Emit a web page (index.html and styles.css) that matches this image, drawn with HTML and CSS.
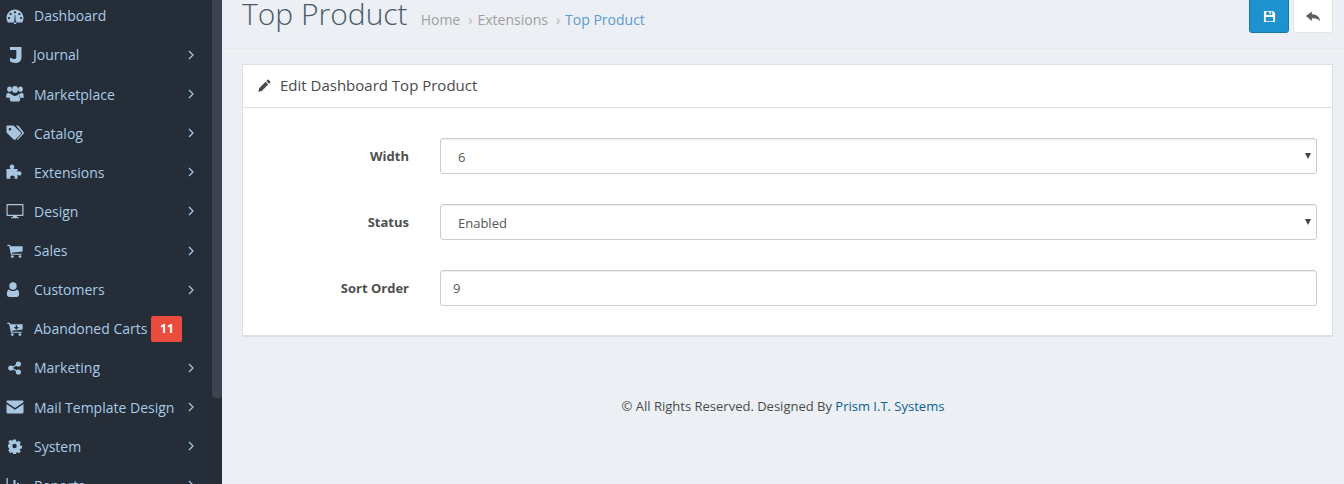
FILE: index.html
```html
<!DOCTYPE html>
<html lang="en">
<head>
<meta charset="utf-8">
<title>Top Product</title>
<link rel="stylesheet" href="styles.css">
</head>
<body>
<aside class="sidebar">
  <nav class="nav">
    <a class="item"><svg class="ico" viewBox="0 0 18 16"><path fill-rule="evenodd" d="M9 1.500C4.200 1.500.5 5.300.5 10c0 1.600.4 3 1.200 4.300.1.200.3.200.5.200h13.600c.2 0 .4 0 .5-.2.8-1.300 1.200-2.700 1.200-4.300 0-4.700-3.700-8.500-8.500-8.500zM9 3.200a1.100 1.100 0 1 1 0 2.200 1.100 1.100 0 0 1 0-2.200zM4.600 5a1.100 1.100 0 1 1 0 2.200 1.100 1.100 0 0 1 0-2.200zM13.400 5a1.100 1.100 0 1 1 0 2.200 1.100 1.100 0 0 1 0-2.200zM3 9a1.100 1.100 0 1 1 0 2.200A1.100 1.100 0 0 1 3 9zM15 9a1.100 1.100 0 1 1 0 2.200A1.100 1.100 0 0 1 15 9zM8.300 13.300L8.700 7h.6l.4 6.300a1.500 1.500 0 1 1-1.400 0z"/></svg><span class="label">Dashboard</span></a>
    <a class="item"><svg class="ico" viewBox="0 0 18 16"><path d="M4 0h11.500v10c0 3.800-2.200 6-5.800 6-2.400 0-4.400-.7-5.700-1.700v-3.800c1.300.9 2.900 1.500 4.300 1.500 1.300 0 2-.6 2-2V3H4z"/></svg><span class="label journal">Journal</span><svg class="chev" viewBox="0 0 6 10"><path d="M1 1l4 4-4 4"/></svg></a>
    <a class="item"><svg class="ico" viewBox="0 1 18 14" preserveAspectRatio="none"><circle cx="3.500" cy="3.800" r="2.300"/><circle cx="14.500" cy="3.800" r="2.300"/><circle cx="9" cy="4" r="3"/><path d="M.2 10.800C.2 8.200 1 7 2.500 7c.6.600 1.300.9 2.100.9.300 0 .5 0 .7-.1-.6 1-.9 2.200-.9 3.500H1c-.5 0-.8-.2-.8-.5zM17.800 10.800c0-2.600-.8-3.800-2.300-3.800-.6.600-1.300.9-2.100.9-.3 0-.5 0-.7-.1.600 1 .9 2.200.9 3.500H17c.5 0 .8-.2.800-.5zM5.500 8.200c1 1 2.200 1.500 3.500 1.500s2.500-.5 3.500-1.500c1.300.1 1.700 2 1.700 4.300 0 1.500-1 2-2 2H5.800c-1 0-2-.5-2-2 0-2.300.4-4.200 1.700-4.300z"/></svg><span class="label">Marketplace</span><svg class="chev" viewBox="0 0 6 10"><path d="M1 1l4 4-4 4"/></svg></a>
    <a class="item"><svg class="ico" viewBox="0 0 18 16"><path fill-rule="evenodd" d="M.5 1.500C.5 1 1 .5 1.500.5H7c.5 0 1 .3 1.400.7l6.300 6.300c.5.500.5 1.300 0 1.800l-5.300 5.300c-.5.500-1.300.5-1.800 0L1.200 8.300C.8 7.900.5 7.400.5 7zM4 3a1.300 1.300 0 1 0 0 2.600A1.300 1.300 0 0 0 4 3z"/><path d="M10 .5h1.500c.5 0 1 .3 1.400.7l4.600 5.800c.5.600.5 1.300 0 1.800l-5.300 5.700c-.4.400-1 .4-1.500.1l5-5.500c.5-.6.500-1.300 0-1.800z"/></svg><span class="label">Catalog</span><svg class="chev" viewBox="0 0 6 10"><path d="M1 1l4 4-4 4"/></svg></a>
    <a class="item"><svg class="ico" viewBox="0 0 18 16"><path d="M.5 5h4.200C4 4 3.800 3.400 3.800 2.700 3.800 1.400 4.900.6 6 .6s2.300.8 2.300 2.100c0 .7-.3 1.400-.9 2.300H11.500v3.200c.6-.6 1.200-.9 1.900-.9 1.200 0 2.100 1 2.100 2.100s-.9 2.100-2.100 2.100c-.7 0-1.300-.3-1.900-.9v4.200H8.200c.4-.6.6-1.100.6-1.600 0-1-.9-1.800-2.300-1.800s-2.300.8-2.300 1.800c0 .5.200 1 .6 1.600H.5z"/></svg><span class="label">Extensions</span><svg class="chev" viewBox="0 0 6 10"><path d="M1 1l4 4-4 4"/></svg></a>
    <a class="item"><svg class="ico" viewBox="0 0 18 16"><path fill-rule="evenodd" d="M1.500 1h15c.6 0 1 .4 1 1v10c0 .6-.4 1-1 1H11v1.200h2v1H5v-1h2V13H1.500c-.6 0-1-.4-1-1V2c0-.6.400-1 1-1zm.2 1.200v9.600h14.600V2.200z"/></svg><span class="label">Design</span><svg class="chev" viewBox="0 0 6 10"><path d="M1 1l4 4-4 4"/></svg></a>
    <a class="item"><svg class="ico" viewBox="-1 0 20 16"><path d="M.5 1h3l.5 1.800h13.500v5.700L5.500 10l.3 1h10.700v1.200H4.500L2.500 2.500H.5z"/><circle cx="6" cy="14.200" r="1.500"/><circle cx="14.500" cy="14.200" r="1.500"/></svg><span class="label">Sales</span><svg class="chev" viewBox="0 0 6 10"><path d="M1 1l4 4-4 4"/></svg></a>
    <a class="item"><svg class="ico" viewBox="-.5 0 18 16"><circle cx="6.500" cy="4" r="3.700"/><path d="M2.600 7.400c1 1 2.400 1.500 3.900 1.500s2.900-.5 3.900-1.500c1.600.2 2.200 2.300 2.200 4.800 0 1.800-1 2.800-2.500 2.800H3C1.500 15 .4 14 .4 12.200c0-2.500.6-4.600 2.200-4.800z"/></svg><span class="label">Customers</span><svg class="chev" viewBox="0 0 6 10"><path d="M1 1l4 4-4 4"/></svg></a>
    <a class="item"><svg class="ico" viewBox="-1 0 20 16"><path fill-rule="evenodd" d="M.5 1h3l.5 1.800h13.500v5.700L5.500 10l.3 1h10.700v1.200H4.500L2.500 2.500H.5zM9.800 3.500v2.200H7.600l2.900 3 2.900-3h-2.200V3.500z"/><circle cx="6" cy="14.200" r="1.500"/><circle cx="14.500" cy="14.200" r="1.500"/></svg><span class="label">Abandoned Carts</span><span class="badge">11</span></a>
    <a class="item"><svg class="ico" viewBox="-1 -1 18 18"><circle cx="3.300" cy="8" r="2.900"/><circle cx="11.800" cy="3.500" r="2.900"/><circle cx="11.800" cy="12.500" r="2.900"/><path d="M3.300 7.300l8-4.300.6 1.200-8 4.300zM3.900 7.300l8 4.300-.6 1.200-8-4.300z"/></svg><span class="label">Marketing</span><svg class="chev" viewBox="0 0 6 10"><path d="M1 1l4 4-4 4"/></svg></a>
    <a class="item"><svg class="ico" viewBox="0 0 18 16"><path d="M.5 2.800c0-.8.600-1.300 1.300-1.300h14.400c.7 0 1.300.5 1.300 1.300v.4L9 9 .5 3.200zM.5 5l8.500 5.800L17.500 5v8.200c0 .8-.6 1.300-1.300 1.300H1.800c-.7 0-1.300-.5-1.300-1.300z"/></svg><span class="label">Mail Template Design</span><svg class="chev" viewBox="0 0 6 10"><path d="M1 1l4 4-4 4"/></svg></a>
    <a class="item"><svg class="ico" viewBox="-1 -1 18 18"><path fill-rule="evenodd" d="M6 .8h3l.4 2 1.300.5 1.700-1.100 2.100 2.100-1.100 1.700.5 1.300 2 .4v3l-2 .4-.5 1.300 1.100 1.700-2.100 2.100-1.700-1.100-1.300.5-.4 2H6l-.4-2-1.300-.5-1.700 1.100L.5 12.900l1.100-1.700-.5-1.300-1-.4V6.500l1-.4.500-1.300L.5 3.100 2.600 1l1.700 1.100 1.300-.5zM7.500 5.500a2.500 2.500 0 1 0 0 5 2.500 2.500 0 0 0 0-5z"/></svg><span class="label">System</span><svg class="chev" viewBox="0 0 6 10"><path d="M1 1l4 4-4 4"/></svg></a>
    <a class="item"><svg class="ico" viewBox="0 0 18 16"><path d="M.5 1h1.300v12.700h15.700V15H.5zM4 8h2v5H4zM7.500 3h2v10h-2zM11 6h2v7h-2zM14.500 9h2v4h-2z"/></svg><span class="label">Reports</span><svg class="chev" viewBox="0 0 6 10"><path d="M1 1l4 4-4 4"/></svg></a>
  </nav>
  <div class="scrollbar"><div class="thumb"></div></div>
</aside>
<div class="main">
  <header class="page-header">
    <h1 class="title">Top Product</h1>
    <ul class="crumbs">
      <li class="crumb">Home</li>
      <li class="crumb sep">Extensions</li>
      <li class="crumb sep current">Top Product</li>
    </ul>
    <div class="actions">
      <button class="btn primary" type="button" aria-label="Save"><svg viewBox="0 0 14 14"><path fill-rule="evenodd" d="M1.500 1h9.300L13 3.200v9.300c0 .3-.2.500-.5.500h-11c-.3 0-.5-.2-.5-.5v-11c0-.3.200-.5.500-.5zM3.500 2v3.500h6.500V2H8.500v2.500H7V2zM3 7.500V12h8V7.500z"/></svg></button>
      <button class="btn ghost" type="button" aria-label="Back"><svg viewBox="0 0 14 14"><path d="M6 2.200v2.300c4 0 6.800 1.700 7.300 6.500-1.100-2.300-3.300-3-7.300-3v2.400L.8 6.200z"/></svg></button>
    </div>
  </header>
  <section class="panel">
    <div class="panel-head">
      <svg class="pencil" viewBox="0 0 14 14"><path d="M10.300.8c.3-.3.700-.3 1 0l1.900 1.900c.3.300.3.700 0 1L11.800 5.100 8.900 2.200zM8.100 3l2.900 2.900-6.900 6.900L.4 13.600l.8-3.700z"/></svg>
      <h2 class="panel-title">Edit Dashboard Top Product</h2>
    </div>
    <form class="form">
      <div class="row">
        <label class="field-label">Width</label>
        <div class="select-wrap"><select class="control select"><option>6</option></select></div>
      </div>
      <div class="row">
        <label class="field-label">Status</label>
        <div class="select-wrap"><select class="control select"><option>Enabled</option></select></div>
      </div>
      <div class="row">
        <label class="field-label">Sort Order</label>
        <input class="control input" type="text" value="9">
      </div>
    </form>
  </section>
  <footer class="footer">© All Rights Reserved. Designed By <a class="footer-link">Prism I.T. Systems</a></footer>
</div>
</body>
</html>
```
FILE: styles.css
```css
* { box-sizing: border-box; }
html, body { height: 100%; }
body {
  margin: 0;
  height: 484px;
  overflow: hidden;
  display: flex;
  background: #eceff4;
  font-family: "Open Sans", sans-serif;
  font-size: 13px;
  color: #4a4a4a;
}
.sidebar {
  width: 222px;
  flex: none;
  height: 484px;
  overflow: hidden;
  display: flex;
  background: #252d38;
}
.nav {
  width: 212px;
  flex: none;
  margin-top: -3.72px;
  display: flex;
  flex-direction: column;
}
.item {
  flex: none;
  height: 39.14px;
  display: flex;
  align-items: center;
  padding: 0 18px 0 6px;
  color: #a9cbe6;
  font-size: 14px;
}
.ico {
  width: 18px;
  height: 16px;
  flex: none;
  fill: #a9c6e0;
  margin-right: 10px;
}
.label { white-space: nowrap; }
.journal { margin-left: -1px; }
.chev {
  width: 6px;
  height: 10px;
  margin-left: auto;
  fill: none;
  stroke: #a9cbe6;
  stroke-width: 1.2;
}
.badge {
  margin-left: 4px;
  width: 31px;
  height: 26px;
  display: flex;
  align-items: center;
  justify-content: center;
  background: #e74c3c;
  border-radius: 2px;
  color: #fff;
  font-size: 12px;
  font-weight: 700;
}
.scrollbar {
  width: 10px;
  flex: none;
  background: #252d38;
}
.thumb {
  height: 398px;
  background: #3b4450;
  border-radius: 0 0 3px 3px;
}
.main {
  flex: 1;
  min-width: 0;
  display: flex;
  flex-direction: column;
}
.page-header {
  height: 49px;
  flex: none;
  display: flex;
  align-items: flex-start;
  padding: 0 11px 0 20px;
  border-bottom: 1px solid #e6e8ec;
}
.title {
  margin: -7px 0 0;
  font-size: 30px;
  font-weight: 300;
  line-height: 42px;
  color: #4a5a6a;
  white-space: nowrap;
}
.crumbs {
  list-style: none;
  margin: 0 0 0 13px;
  padding: 10px 0 0;
  display: flex;
  font-size: 14px;
  line-height: 20px;
  color: #a0a0a0;
}
.crumb.sep::before {
  content: "›";
  margin: 0 5px 0 8px;
  color: #b5b5b5;
}
.current { color: #5b9bd1; }
.actions {
  margin-left: auto;
  display: flex;
  gap: 4px;
  margin-top: -8px;
}
.btn {
  width: 40px;
  height: 41px;
  padding: 0;
  border: 1px solid transparent;
  border-radius: 3px;
  display: flex;
  align-items: center;
  justify-content: center;
}
.btn svg { width: 13px; height: 13px; margin-top: 8px; }
.primary { background: #1e91cf; border-color: #1978ab; }
.primary svg { fill: #fff; }
.ghost { background: #fff; border-color: #e2e4e8; }
.ghost svg { width: 16px; height: 16px; fill: #5f5f5f; }
.panel {
  margin: 15px 11px 0 20px;
  height: 273px;
  flex: none;
  background: #fff;
  border: 1px solid #dcdfe3;
  border-bottom-width: 2px;
}
.panel-head {
  height: 43px;
  display: flex;
  align-items: center;
  padding: 0 0 2px 15px;
  border-bottom: 1px solid #dcdfe3;
}
.pencil { width: 13px; height: 13px; fill: #4a4a4a; margin: 0 9px 0 0; flex: none; }
.panel-title {
  margin: 0;
  font-size: 15px;
  font-weight: 400;
  color: #4a4a4a;
}
.form {
  padding: 30px 15px 0 0;
  display: flex;
  flex-direction: column;
  gap: 30px;
}
.row {
  display: flex;
  align-items: center;
}
.field-label {
  width: 166px;
  flex: none;
  margin-right: 31px;
  text-align: right;
  font-size: 13px;
  font-weight: 700;
  color: #4f4f4f;
  white-space: nowrap;
}
.select-wrap {
  position: relative;
  flex: 1;
  min-width: 0;
}
.select-wrap::after {
  content: "";
  position: absolute;
  right: 6px;
  top: 15px;
  border-left: 3px solid transparent;
  border-right: 3px solid transparent;
  border-top: 6px solid #444;
  pointer-events: none;
}
.control {
  width: 100%;
  height: 36px;
  padding: 0 12px;
  background: #fff;
  border: 1px solid #ccc;
  border-radius: 3px;
  font-family: "Open Sans", sans-serif;
  font-size: 13px;
  color: #555;
  box-shadow: inset 0 1px 1px rgba(0,0,0,.075);
}
.input { flex: 1; min-width: 0; }
.select {
  appearance: none;
  padding: 2px 12px 0 17px;
}
.footer {
  margin-top: 61px;
  text-align: center;
  font-size: 13px;
  line-height: 17px;
  color: #4a4a4a;
}
.footer-link { color: #0b6295; }
```
